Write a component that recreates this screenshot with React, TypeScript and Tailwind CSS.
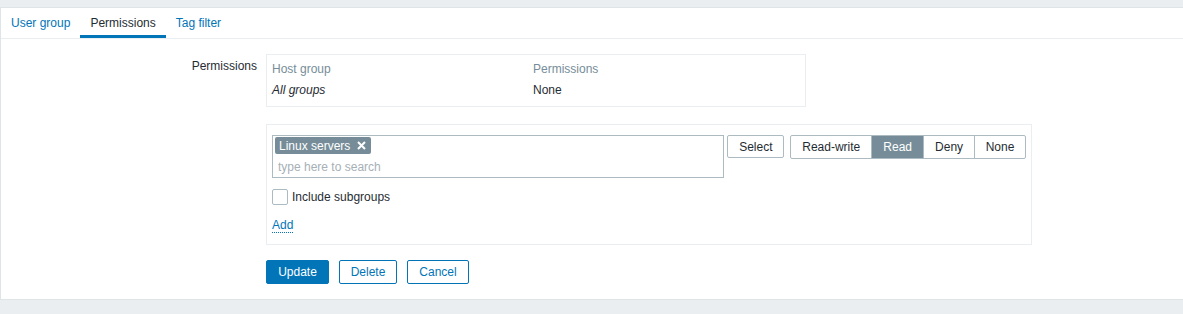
const tabs = [
  { label: 'User group', active: false },
  { label: 'Permissions', active: true },
  { label: 'Tag filter', active: false },
];

const levels = ['Read-write', 'Read', 'Deny', 'None'];

const App = () => {
  return (
    <div
      className="min-h-screen bg-[#ebeef0] pt-[7px] text-[12px] text-[#1f2c33]"
      style={{ fontFamily: '"Liberation Sans", Arial, sans-serif' }}
    >
      <div className="h-[293px] border border-r-0 border-[#dfe4e7] bg-white">
        {/* tabs */}
        <div className="flex h-[31px] border-b border-[#ebeef0]">
          {tabs.map((tab) => (
            <div
              key={tab.label}
              className={
                tab.active
                  ? 'flex h-[30px] items-center border-b-[3px] border-[#0275b8] px-[10px] pt-[3px] text-[#1f2c33]'
                  : 'flex h-[30px] items-center px-[10px] text-[#0275b8]'
              }
            >
              {tab.label}
            </div>
          ))}
        </div>

        {/* form */}
        <div className="flex pt-[15px]">
          <div className="w-[256px] pt-[5px] text-right leading-[14px]">Permissions</div>
          <div className="ml-[9px] flex flex-col">
            <div className="w-[540px] border border-[#ebeef0] px-[5px] pt-[3px] pb-[6px]">
              <div className="grid h-[21px] grid-cols-[261px_1fr] items-center text-[#768d99]">
                <span>Host group</span>
                <span>Permissions</span>
              </div>
              <div className="grid h-[21px] grid-cols-[261px_1fr] items-center">
                <span className="italic">All groups</span>
                <span>None</span>
              </div>
            </div>

            <div className="mt-[17px] w-[766px] border border-[#ebeef0] px-[5px] pt-[10px] pb-[10px]">
              <div className="flex items-start">
                <div className="flex h-[43px] w-[453px] flex-col border border-[#acbbc2] px-[2px] pt-[1px]">
                  <div className="flex">
                    <span className="flex h-[17px] items-center gap-[7px] rounded-[2px] bg-[#768d99] pl-[4px] pr-[5px] text-white">
                      Linux servers
                      <svg width="9" height="9" viewBox="0 0 9 9">
                        <path d="M1 1L8 8M8 1L1 8" stroke="white" strokeWidth="2" />
                      </svg>
                    </span>
                  </div>
                  <span className="mt-[4px] pl-[3px] text-[#a6b0b6]">type here to search</span>
                </div>
                <button className="ml-[3px] h-[23px] w-[57px] rounded-[2px] border border-[#acbbc2] bg-white text-[#1f2c33]">
                  Select
                </button>
                <div className="ml-[6px] flex h-[24px] overflow-hidden rounded-[2px] border border-[#acbbc2]">
                  {levels.map((level, index) => (
                    <div
                      key={level}
                      className={
                        (index > 0 ? 'border-l border-[#acbbc2] ' : '') +
                        (level === 'Read'
                          ? 'flex w-[52px] items-center justify-center bg-[#768d99] text-white'
                          : level === 'Read-write'
                            ? 'flex w-[80px] items-center justify-center'
                            : 'flex w-[51px] items-center justify-center')
                      }
                    >
                      {level}
                    </div>
                  ))}
                </div>
              </div>

              <label className="mt-[10px] flex items-center gap-[4px]">
                <span className="h-[16px] w-[16px] rounded-[2px] border border-[#acbbc2] bg-white" />
                Include subgroups
              </label>

              <div className="mt-[10px]">
                <span className="border-b border-dotted border-[#0275b8] text-[#0275b8]">Add</span>
              </div>
            </div>

            <div className="mt-[15px] flex gap-[10px]">
              <button className="h-[24px] w-[63px] rounded-[2px] border border-[#0275b8] bg-[#0275b8] text-white">
                Update
              </button>
              <button className="h-[24px] w-[58px] rounded-[2px] border border-[#0275b8] bg-white text-[#0275b8]">
                Delete
              </button>
              <button className="h-[24px] w-[62px] rounded-[2px] border border-[#0275b8] bg-white text-[#0275b8]">
                Cancel
              </button>
            </div>
          </div>
        </div>
      </div>
    </div>
  );
};

export default App;
